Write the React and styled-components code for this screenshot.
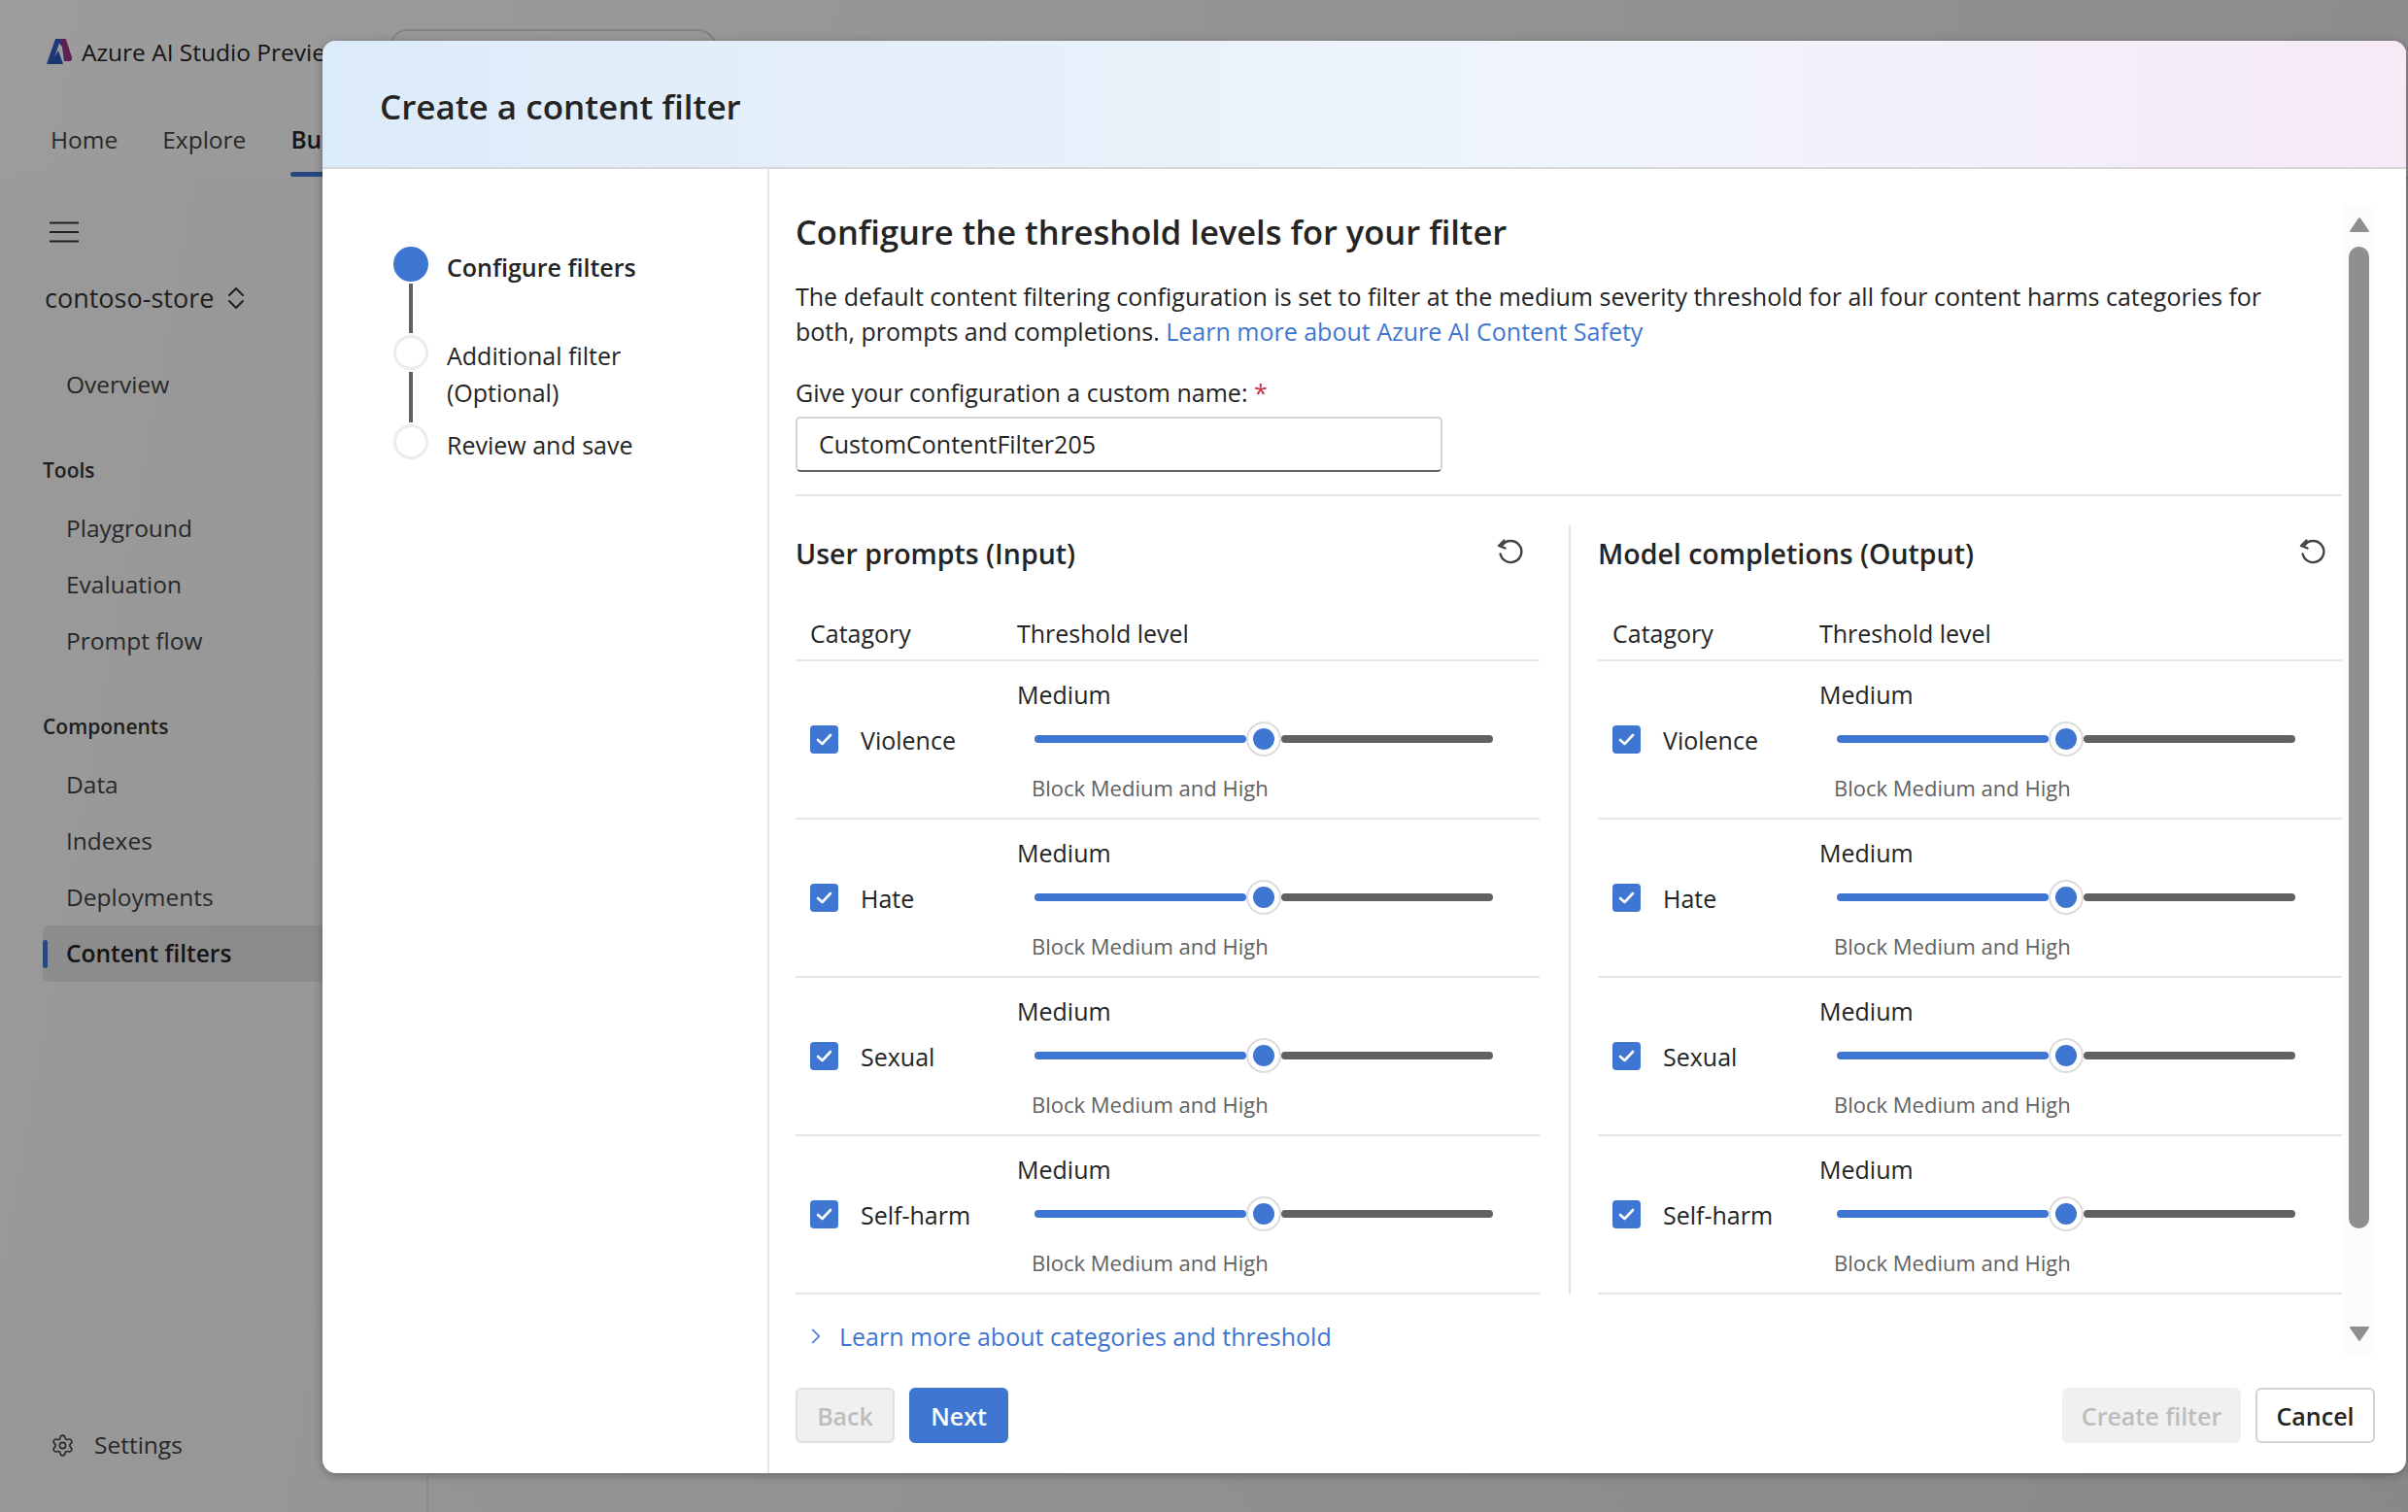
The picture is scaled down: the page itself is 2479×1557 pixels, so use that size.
import React from 'react';
import styled, { createGlobalStyle } from 'styled-components';
import { Settings, ChevronRight } from 'lucide-react';

const FONT = `"Open Sans", "Noto Sans", "Liberation Sans", sans-serif`;

const Global = createGlobalStyle`
  html, body { margin: 0; padding: 0; }
  body { font-family: ${FONT}; background: #fff; overflow: hidden; }
  * { box-sizing: border-box; }
`;

const Page = styled.div`
  position: relative;
  width: 2479px;
  height: 1557px;
  overflow: hidden;
  display: flex;
  flex-direction: column;
  background: #f8f8f8;
  color: #242424;
`;
const TopBar = styled.header`
  height: 182px;
  flex: none;
  background: #fdfdfd;
  box-shadow: 0 1px 3px rgba(0,0,0,.25);
  padding: 30px 0 0 47px;
  display: flex;
  flex-direction: column;
`;
const BrandRow = styled.div`
  display: flex;
  align-items: center;
  height: 46px;
`;
const BrandName = styled.span`
  font-size: 24.5px;
  margin-left: 9px;
  width: 290px;
  white-space: nowrap;
`;
const VRule = styled.span`
  width: 1px;
  height: 32px;
  background: #777;
  margin-top: 10px;
`;
const SearchBox = styled.div`
  width: 338px;
  height: 46px;
  margin-left: 25px;
  border: 2px solid #d8d8d8;
  border-radius: 20px;
`;
const Tabs = styled.nav`
  display: flex;
  gap: 46px;
  margin-top: 30px;
  padding-left: 5px;
  font-size: 24.5px;
  color: #424242;
`;
const Tab = styled.span`
  position: relative;
  height: 76px;
  line-height: 76px;
  font-weight: ${p => (p.$active ? 600 : 400)};
  color: ${p => (p.$active ? '#242424' : '#424242')};
  ${p => p.$active && `&::after{content:"";position:absolute;left:0;right:0;bottom:0;height:5px;border-radius:3px;background:#3f76d2;}`}
`;
const Main = styled.div`
  flex: 1;
  display: flex;
`;
const Sidebar = styled.aside`
  width: 441px;
  border-right: 2px solid #e4e4e4;
  background: #fafafa;
  padding: 46px 0 0 44px;
  display: flex;
  flex-direction: column;
  position: relative;
`;
const Burger = styled.svg`
  width: 30px;
  height: 22px;
  margin-left: 7px;
  display: block;
`;
const Project = styled.div`
  display: flex;
  align-items: center;
  gap: 14px;
  margin: 37px 0 0 2px;
  font-size: 27px;
  font-weight: 500;
  line-height: 40px;
  color: #333;
`;
const NavItem = styled.div`
  position: relative;
  height: 58px;
  line-height: 58px;
  margin-right: -2px;
  padding-left: 24px;
  font-size: 24.5px;
  border-radius: 6px 0 0 6px;
  color: ${p => (p.$active ? '#242424' : '#424242')};
  font-weight: ${p => (p.$active ? 600 : 400)};
  background: ${p => (p.$active ? '#e6e6e6' : 'transparent')};
  margin-top: ${p => p.$top || 0}px;
  ${p => p.$active && `&::before{content:"";position:absolute;left:0;top:15px;width:5px;height:29px;border-radius:3px;background:#3f76d2;}`}
`;
const NavGroup = styled.div`
  font-size: 21px;
  font-weight: 600;
  line-height: 30px;
  color: #333;
  margin-top: ${p => p.$top}px;
  margin-bottom: 16px;
`;
const SettingsRow = styled.div`
  position: absolute;
  left: 52px;
  top: 1468px;
  margin-top: -182px;
  display: flex;
  align-items: center;
  gap: 20px;
  font-size: 24.5px;
  line-height: 40px;
  color: #424242;
`;
const Scrim = styled.div`
  position: absolute;
  inset: 0;
  background: linear-gradient(100deg, rgba(0,0,0,.385), rgba(0,0,0,.45));
`;

const Modal = styled.section`
  position: absolute;
  left: 332px;
  top: 42px;
  width: 2145px;
  height: 1475px;
  background: #fff;
  border-radius: 14px;
  overflow: hidden;
  box-shadow: 0 2px 10px rgba(0,0,0,.3);
  display: flex;
  flex-direction: column;
  color: #242424;
`;
const ModalHead = styled.div`
  height: 132px;
  flex: none;
  padding-left: 59px;
  display: flex;
  align-items: center;
  background: linear-gradient(90deg, #dcebf9 0%, #e7f0fa 35%, #f0f5fc 60%, #f6eaf6 100%);
  border-bottom: 2px solid #d8d8d8;
`;
const ModalTitle = styled.h1`
  margin: 0;
  font-size: 35px;
  font-weight: 600;
  line-height: 48px;
  position: relative;
  top: 3px;
`;
const ModalBody = styled.div`
  flex: 1;
  display: flex;
  min-height: 0;
`;
const Stepper = styled.ol`
  width: 460px;
  flex: none;
  margin: 0;
  padding: 80px 0 0 73px;
  list-style: none;
  border-right: 2px solid #e6e6e6;
`;
const Step = styled.li`
  display: flex;
  gap: 19px;
  height: ${p => p.$h}px;
`;
const Marker = styled.div`
  width: 36px;
  flex: none;
  display: flex;
  flex-direction: column;
  align-items: center;
`;
const Dot = styled.span`
  width: 36px;
  height: 36px;
  flex: none;
  border-radius: 50%;
  background: ${p => (p.$on ? '#3f76d2' : '#fff')};
  border: ${p => (p.$on ? 'none' : '3px solid #ececec')};
`;
const Stem = styled.span`
  width: 4px;
  flex: 1;
  margin: 2px 0;
  background: #616161;
`;
const StepText = styled.div`
  font-size: 25px;
  line-height: 38px;
  width: 260px;
  font-weight: ${p => (p.$on ? 600 : 400)};
  padding-top: 2px;
`;
const Right = styled.div`
  flex: 1;
  min-width: 0;
  display: flex;
  flex-direction: column;
  padding: 0 32px 0 27px;
`;
const ScrollArea = styled.div`
  height: 1220px;
  flex: none;
  display: flex;
`;
const Content = styled.div`
  width: 1592px;
  flex: none;
  padding-top: 42px;
`;
const Heading = styled.h2`
  margin: 0;
  font-size: 34.5px;
  font-weight: 600;
  line-height: 46px;
`;
const Para = styled.p`
  margin: 25px 0 0;
  width: 1560px;
  font-size: 25px;
  line-height: 36px;
`;
const Link = styled.span`
  color: #3f76d2;
`;
const FieldLabel = styled.div`
  margin-top: 27px;
  font-size: 25px;
  line-height: 36px;
  & > b { color: #c4314b; font-weight: 400; }
`;
const NameInput = styled.div`
  margin-top: 7px;
  width: 666px;
  height: 57px;
  border: 2px solid #d4d4d4;
  border-bottom-color: #616161;
  border-radius: 5px;
  padding-left: 22px;
  font-size: 25px;
  line-height: 53px;
`;
const Rule = styled.hr`
  margin: 23px 0 0;
  border: 0;
  height: 2px;
  background: #e6e6e6;
`;
const Columns = styled.div`
  margin-top: 29px;
  display: grid;
  grid-template-columns: 766px 1fr;
  column-gap: 60px;
  position: relative;
  &::before {
    content: "";
    position: absolute;
    left: 796px;
    top: 0;
    bottom: 0;
    width: 2px;
    background: #e6e6e6;
  }
`;
const Col = styled.div`
  padding-top: 10px;
`;
const ColHead = styled.div`
  display: flex;
  justify-content: space-between;
  align-items: center;
  height: 40px;
  padding-right: 15px;
`;
const ColTitle = styled.h3`
  margin: 0;
  font-size: 28.5px;
  font-weight: 600;
`;
const RowGrid = styled.div`
  display: grid;
  grid-template-columns: 213px 1fr;
  padding-left: 15px;
  border-bottom: 2px solid #e6e6e6;
`;
const HeadRow = styled(RowGrid)`
  margin-top: 44px;
  height: 47px;
  font-size: 25px;
  line-height: 36px;
`;
const DataRow = styled(RowGrid)`
  height: 163px;
  align-items: center;
`;
const Cat = styled.label`
  display: flex;
  align-items: center;
  gap: 23px;
  font-size: 25px;
  line-height: 36px;
`;
const Check = styled.span`
  width: 29px;
  height: 29px;
  border-radius: 4px;
  background: #3f76d2;
  display: flex;
  align-items: center;
  justify-content: center;
  flex: none;
`;
const Threshold = styled.div`
  display: flex;
  flex-direction: column;
  font-size: 25px;
`;
const Level = styled.div`
  line-height: 36px;
`;
const Slider = styled.div`
  position: relative;
  width: 472px;
  height: 36px;
  margin: 10px 0 0 18px;
  display: flex;
  align-items: center;
  gap: 36px;
`;
const Track = styled.span`
  flex: 1;
  height: 8px;
  border-radius: 4px;
  background: ${p => p.$c};
`;
const Thumb = styled.span`
  position: absolute;
  left: 218px;
  top: 0;
  width: 36px;
  height: 36px;
  border-radius: 50%;
  background: #fff;
  border: 2px solid #dcdcdc;
  display: flex;
  align-items: center;
  justify-content: center;
  &::after {
    content: "";
    width: 22px;
    height: 22px;
    border-radius: 50%;
    background: #3f76d2;
  }
`;
const Hint = styled.div`
  margin: 17px 0 0 15px;
  font-size: 22px;
  line-height: 30px;
  color: #616161;
`;
const LearnMore = styled.div`
  margin-top: 25px;
  display: flex;
  align-items: center;
  gap: 11px;
  padding-left: 8px;
  font-size: 25px;
  line-height: 36px;
  color: #3f76d2;
`;
const ScrollBar = styled.div`
  margin: 37px 0 0 1px;
  width: 34px;
  height: 1183px;
  background: #fcfcfc;
  display: flex;
  flex-direction: column;
  align-items: center;
  padding: 12px 0;
`;
const Arrow = styled.svg`
  width: 22px;
  height: 17px;
  flex: none;
  display: block;
`;
const ThumbBar = styled.div`
  width: 21px;
  height: 1014px;
  margin: 14px 0 100px;
  border-radius: 11px;
  background: #8f8f8f;
`;
const Footer = styled.div`
  margin-top: 35px;
  display: flex;
  align-items: center;
  gap: 15px;
`;
const Spacer = styled.div`
  flex: 1;
`;
const Btn = styled.button`
  height: 57px;
  width: ${p => p.$w}px;
  font-family: inherit;
  font-size: 25px;
  font-weight: 600;
  padding: 0;
  border-radius: 6px;
  border: 2px solid ${p => p.$border};
  background: ${p => p.$bg};
  color: ${p => p.$fg};
`;

const cats = ['Violence', 'Hate', 'Sexual', 'Self-harm'];

const Tick = () => (
  <svg width="19" height="15" viewBox="0 0 19 15" fill="none">
    <path d="M3 8l4.5 4L16 3" stroke="#fff" strokeWidth="2.6" strokeLinecap="round" strokeLinejoin="round" />
  </svg>
);

const ResetIcon = () => (
  <svg width="30" height="30" viewBox="0 0 30 30" fill="none" stroke="#424242" strokeWidth="2.4" strokeLinecap="round" strokeLinejoin="round">
    <path d="M6.5 6.5A11 11 0 1 1 4.6 15.5" />
    <path d="M8.5 1.5L3 7l6.5 2.5" />
  </svg>
);

const Panel = ({ title }) => (
  <Col>
    <ColHead>
      <ColTitle>{title}</ColTitle>
      <ResetIcon />
    </ColHead>
    <HeadRow>
      <span>Catagory</span>
      <span>Threshold level</span>
    </HeadRow>
    {cats.map(c => (
      <DataRow key={c}>
        <Cat>
          <Check><Tick /></Check>
          {c}
        </Cat>
        <Threshold>
          <Level>Medium</Level>
          <Slider>
            <Track $c="#3f76d2" />
            <Track $c="#616161" />
            <Thumb />
          </Slider>
          <Hint>Block Medium and High</Hint>
        </Threshold>
      </DataRow>
    ))}
  </Col>
);

export default function App() {
  return (
    <Page>
      <Global />
      <TopBar>
        <BrandRow>
          <svg width="28" height="28" viewBox="0 0 28 28">
            <path d="M10 1h10l7 19c.5 2-1 4-3 4h-5L17 9z" fill="#5a3fb0" />
            <path d="M15 1h6l6 20c0 2-1 3-3 3h-3z" fill="#a8327e" opacity=".85" />
            <path d="M10 1h7c-1 0-2 1-2.500 2.500L7 27H1z" fill="#2f5fc4" />
            <path d="M5 27l8-14 5 14z" fill="#2a55b8" />
          </svg>
          <BrandName>Azure AI Studio Preview</BrandName>
          <VRule />
          <SearchBox />
        </BrandRow>
        <Tabs>
          <Tab>Home</Tab>
          <Tab>Explore</Tab>
          <Tab $active>Build</Tab>
        </Tabs>
      </TopBar>
      <Main>
        <Sidebar>
          <Burger viewBox="0 0 30 22">
            <path d="M0 1.500h30M0 11h30M0 20.500h30" stroke="#333" strokeWidth="2" />
          </Burger>
          <Project>
            contoso-store
            <svg width="18" height="24" viewBox="0 0 18 24" fill="none" stroke="#333" strokeWidth="2" strokeLinecap="round" strokeLinejoin="round">
              <path d="M2 9l7-7 7 7M2 15l7 7 7-7" />
            </svg>
          </Project>
          <NavItem $top={40}>Overview</NavItem>
          <NavGroup $top={44}>Tools</NavGroup>
          <NavItem>Playground</NavItem>
          <NavItem>Evaluation</NavItem>
          <NavItem>Prompt flow</NavItem>
          <NavGroup $top={44}>Components</NavGroup>
          <NavItem>Data</NavItem>
          <NavItem>Indexes</NavItem>
          <NavItem>Deployments</NavItem>
          <NavItem $active>Content filters</NavItem>
          <SettingsRow>
            <Settings size={25} strokeWidth={1.5} color="#424242" />
            Settings
          </SettingsRow>
        </Sidebar>
      </Main>
      <Scrim />
      <Modal>
        <ModalHead>
          <ModalTitle>Create a content filter</ModalTitle>
        </ModalHead>
        <ModalBody>
          <Stepper>
            <Step $h={91}>
              <Marker><Dot $on /><Stem /></Marker>
              <StepText $on>Configure filters</StepText>
            </Step>
            <Step $h={92}>
              <Marker><Dot /><Stem /></Marker>
              <StepText>Additional filter (Optional)</StepText>
            </Step>
            <Step $h={40}>
              <Marker><Dot /></Marker>
              <StepText>Review and save</StepText>
            </Step>
          </Stepper>
          <Right>
            <ScrollArea>
              <Content>
                <Heading>Configure the threshold levels for your filter</Heading>
                <Para>
                  The default content filtering configuration is set to filter at the medium severity threshold for all four content harms categories for both, prompts and completions. <Link>Learn more about Azure AI Content Safety</Link>
                </Para>
                <FieldLabel>Give your configuration a custom name: <b>*</b></FieldLabel>
                <NameInput>CustomContentFilter205</NameInput>
                <Rule />
                <Columns>
                  <Panel title="User prompts (Input)" />
                  <Panel title="Model completions (Output)" />
                </Columns>
                <LearnMore>
                  <ChevronRight size={26} strokeWidth={1.6} color="#3f76d2" />
                  Learn more about categories and threshold
                </LearnMore>
              </Content>
              <ScrollBar>
                <Arrow viewBox="0 0 22 17"><path d="M11 2L20 15H2z" fill="#8f8f8f" stroke="#8f8f8f" strokeWidth="2" strokeLinejoin="round" /></Arrow>
                <ThumbBar />
                <Arrow viewBox="0 0 22 17"><path d="M11 15L20 2H2z" fill="#8f8f8f" stroke="#8f8f8f" strokeWidth="2" strokeLinejoin="round" /></Arrow>
              </ScrollBar>
            </ScrollArea>
            <Footer>
              <Btn $w={102} $bg="#f0f0f0" $fg="#bdbdbd" $border="#e0e0e0">Back</Btn>
              <Btn $w={102} $bg="#3f76d2" $fg="#fff" $border="#3f76d2">Next</Btn>
              <Spacer />
              <Btn $w={184} $bg="#f0f0f0" $fg="#bdbdbd" $border="#f0f0f0">Create filter</Btn>
              <Btn $w={123} $bg="#fff" $fg="#242424" $border="#d1d1d1">Cancel</Btn>
            </Footer>
          </Right>
        </ModalBody>
      </Modal>
    </Page>
  );
}
